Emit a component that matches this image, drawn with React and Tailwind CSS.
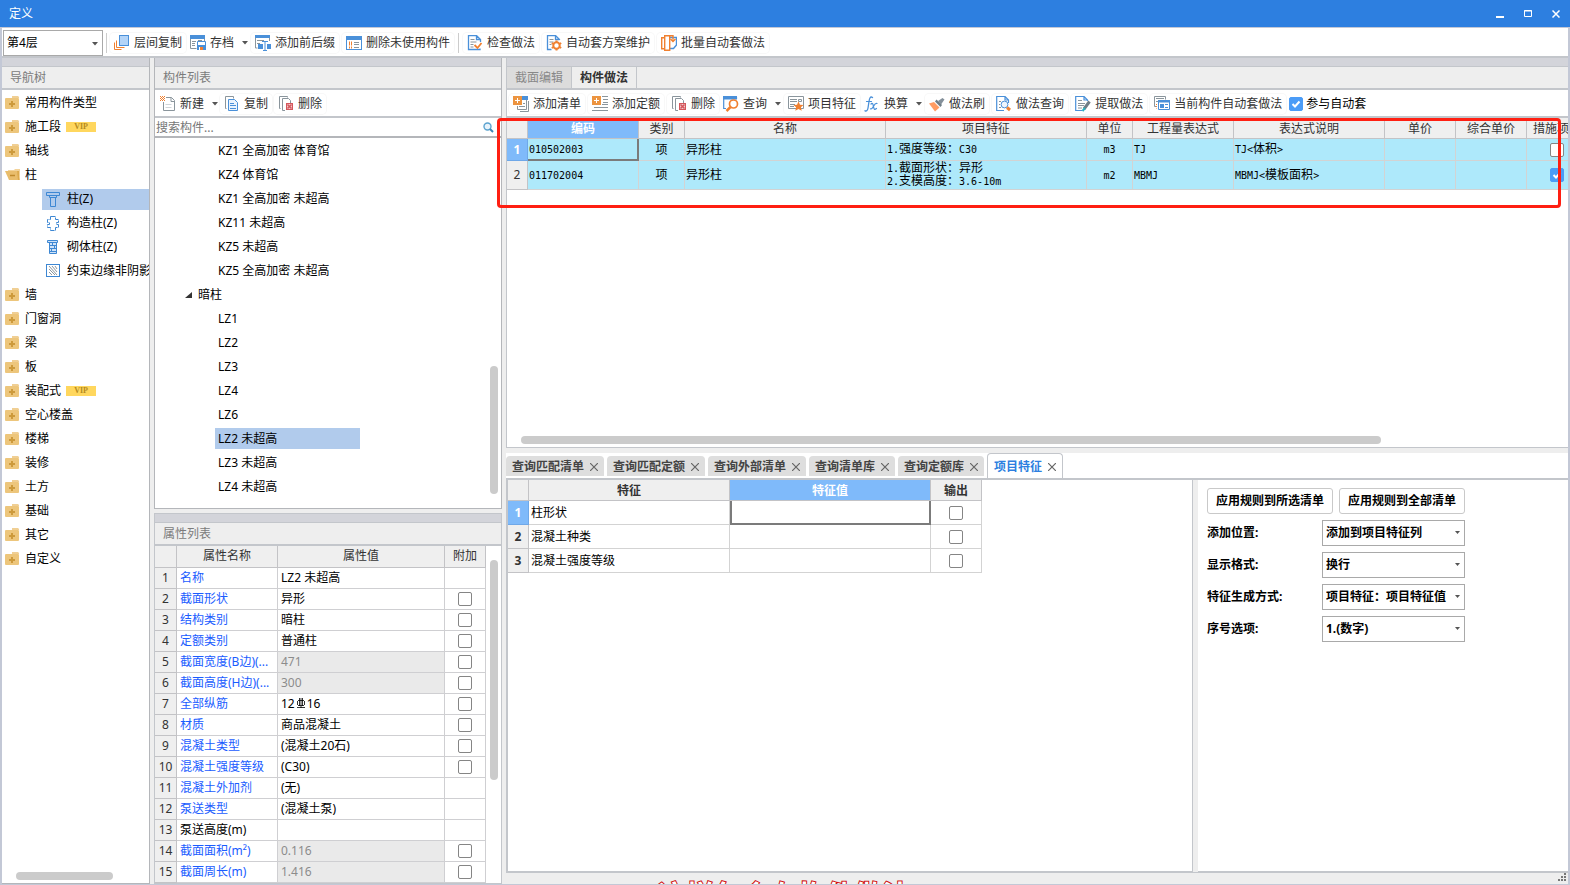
import React from 'react';

const navTop = [
  { name: '常用构件类型' },
  { name: '施工段', vip: true },
  { name: '轴线' },
];

const navColumns = [
  { name: '柱(Z)', icon: 'column', active: true },
  { name: '构造柱(Z)', icon: 'struct' },
  { name: '砌体柱(Z)', icon: 'brick' },
  { name: '约束边缘非阴影', icon: 'hatch' },
];

const navBottom = [
  { name: '墙' },
  { name: '门窗洞' },
  { name: '梁' },
  { name: '板' },
  { name: '装配式', vip: true },
  { name: '空心楼盖' },
  { name: '楼梯' },
  { name: '装修' },
  { name: '土方' },
  { name: '基础' },
  { name: '其它' },
  { name: '自定义' },
];

const kzItems = ['KZ1 全高加密 体育馆', 'KZ4 体育馆', 'KZ1 全高加密 未超高', 'KZ11 未超高', 'KZ5 未超高', 'KZ5 全高加密 未超高'];
const lzItems = ['LZ1', 'LZ2', 'LZ3', 'LZ4', 'LZ6', 'LZ2 未超高', 'LZ3 未超高', 'LZ4 未超高'];

const properties = [
  { name: '名称', value: 'LZ2 未超高' },
  { name: '截面形状', value: '异形', check: true },
  { name: '结构类别', value: '暗柱', check: true },
  { name: '定额类别', value: '普通柱', check: true },
  { name: '截面宽度(B边)(...', value: '471', check: true, readOnly: true },
  { name: '截面高度(H边)(...', value: '300', check: true, readOnly: true },
  { name: '全部纵筋', value: 'rebar', check: true },
  { name: '材质', value: '商品混凝土', check: true },
  { name: '混凝土类型', value: '(混凝土20石)', check: true },
  { name: '混凝土强度等级', value: '(C30)', check: true },
  { name: '混凝土外加剂', value: '(无)' },
  { name: '泵送类型', value: '(混凝土泵)' },
  { name: '泵送高度(m)', value: '', plain: true },
  { name: '截面面积(m²)', value: '0.116', check: true, readOnly: true },
  { name: '截面周长(m)', value: '1.416', check: true, readOnly: true },
];

const queryTabs = ['查询匹配清单', '查询匹配定额', '查询外部清单', '查询清单库', '查询定额库'];
const features = ['柱形状', '混凝土种类', '混凝土强度等级'];

const settings = [
  { id: 'position', label: '添加位置:', value: '添加到项目特征列' },
  { id: 'format', label: '显示格式:', value: '换行' },
  { id: 'mode', label: '特征生成方式:', value: '项目特征：项目特征值' },
  { id: 'serial', label: '序号选项:', value: '1.(数字)' },
];

const BLUE = '#4a90d9';
const GRAY = '#8a959c';
const ORANGE = '#f08030';

const icons = {
  layers: (
    <>
      <path d="M.5 7.500v7h7M2.500 5.500v7h8" fill="none" stroke={ORANGE} />
      <rect x="5.500" y=".5" width="9" height="10" fill="#b3d4f8" stroke={BLUE} />
    </>
  ),
  archive: (
    <>
      <path d="M.5 1v12.500h6M14.500 1v5" fill="none" stroke={GRAY} />
      <path d="M0 0h15v4H0z" fill={BLUE} />
      <path d="M2 6.500h4M2 8.500h3M2 10.500h3M8 5.500h4" stroke={GRAY} />
      <path d="M7.500 6.500h8v8h-8z" fill="#fff" stroke={BLUE} />
      <path d="M7 10h9v5H7z" fill={BLUE} />
      <path d="M9 12h4v3H9z" fill="#fff" />
      <path d="M10 12h3v3h-3z" fill={ORANGE} />
    </>
  ),
  affix: (
    <>
      <path d="M.5 2v11h2M14.500 2v4" fill="none" stroke={GRAY} />
      <path d="M0 0h15v3H0z" fill={BLUE} />
      <path d="M2 5.500h7M2 8.500h3" stroke={GRAY} />
      <path d="M3 9h5v5H3zM12 9h4v5h-4z" fill={BLUE} />
      <path d="M7 6.500h6M10 6.500v9M8 15.500h4" stroke={BLUE} fill="none" />
    </>
  ),
  unused: (
    <>
      <rect x=".5" y="1.500" width="15" height="13" fill="#fff" stroke={BLUE} />
      <path d="M0 1h16v4H0z" fill={BLUE} />
      <path d="M3 7.500h3M3 9.500h3M3 12.500h3" stroke={ORANGE} strokeDasharray="1 1" strokeWidth="2" />
      <path d="M8 7.500h5M8 9.500h5M8 12.500h5" stroke={GRAY} />
    </>
  ),
  check: (
    <>
      <path d="M13.500 7V4.500l-4-4h-8v14h11.500v-1M9.500.5v4h4" fill="none" stroke={BLUE} strokeWidth="1.300" />
      <path d="M3.500 4.500h4M3.500 7h6M3.500 9.500h3M3.500 12h3" stroke={GRAY} />
      <path d="M7.500 10l3 3 4-5" fill="none" stroke={ORANGE} strokeWidth="1.800" />
    </>
  ),
  gearDoc: (
    <>
      <path d="M13.500 5V4.500l-4-4h-8v14h4M9.500.5v4h4" fill="none" stroke={BLUE} strokeWidth="1.300" />
      <path d="M3.500 4.500h4M3.500 7h4M3.500 9.500h2" stroke={GRAY} />
      <circle cx="10.500" cy="10.500" r="3.200" fill="none" stroke={ORANGE} strokeWidth="2" />
      <path d="M10.500 5.500v2M10.500 13.500v2M5.800 8l1.800 1M13.400 12l1.800 1M5.800 13l1.800-1M13.400 9l1.800-1" stroke={ORANGE} strokeWidth="2" />
    </>
  ),
  batch: (
    <>
      <path d="M9 2.500h6.500V10l-3 3.500H8" fill="#fff" stroke={BLUE} strokeWidth="1.400" />
      <path d="M.7 2.700h5v11h-5z" fill="#fff" stroke={ORANGE} strokeWidth="1.400" />
      <path d="M3.700.7h5v14.500h-5z" fill="#fff" stroke={ORANGE} strokeWidth="1.400" />
      <path d="M8 .8h4v4M9.500 4l2.500 2.500L14.500 4" fill="none" stroke={ORANGE} strokeWidth="1.400" />
    </>
  ),
  newDoc: (
    <>
      <path d="M3.500 6v8.500h11v-10l-3-3H6M11 1.500v4h3.500" fill="none" stroke={GRAY} />
      <path d="M5.500 8.500h6M5.500 11.500h6" stroke="#cfd4d8" />
      <path d="M0 0h1v1H0zM2 0h1v1H2zM4 0h1v1H4zM1 1h1v1H1zM3 1h1v1H3zM0 2h1v1H0zM2 2h1v1H2zM4 2h1v1H4zM1 3h1v1H1zM3 3h1v1H3zM0 4h1v1H0zM2 4h1v1H2zM4 4h1v1H4z" fill={ORANGE} />
    </>
  ),
  copy: (
    <>
      <path d="M2.500 12.500h-1V.5h8v2" fill="none" stroke={GRAY} />
      <path d="M4.500 3.500h6l3 3v8h-9z" fill="#eaf3fd" stroke={BLUE} />
      <path d="M6 7.500h4M6 9.500h6M6 12.500h6" stroke={BLUE} />
    </>
  ),
  remove: (
    <>
      <path d="M2.500 12.500h-1V.5h8v1" fill="none" stroke={GRAY} />
      <path d="M7 14.500H4.500v-12h6l2 2V7" fill="none" stroke={GRAY} />
      <rect x="8.500" y="7.500" width="6" height="6" fill="#f3c6c9" stroke="#d4575c" />
      <path d="M9.500 8.500l4 4M13.500 8.500l-4 4" stroke="#d4575c" strokeWidth="1.500" />
    </>
  ),
  addList: (
    <>
      <path d="M4.500 10v3.500h9V3" fill="none" stroke={GRAY} />
      <path d="M7 15.500h8.500V5" fill="none" stroke={GRAY} />
      <path d="M9 0h6v4H9z" fill={BLUE} />
      <path d="M0 0h9v9H0z" fill="#ec9440" />
      <path d="M4.500 2v5M2 4.500h5" stroke="#fff" />
      <path d="M6 10.500h6M10 7.500h2" stroke={GRAY} />
    </>
  ),
  addQuota: (
    <>
      <path d="M0 0h9v9H0z" fill="#ec9440" />
      <path d="M4.500 2v5M2 4.500h5" stroke="#fff" />
      <path d="M10 .5h6M11 3.500h5M11 6.500h5M10 8.500h6M2 11.500h14M0 14.500h16" stroke={GRAY} />
    </>
  ),
  query: (
    <>
      <path d="M.7 3v9.500H3M13.500 1v2" fill="none" stroke={BLUE} strokeWidth="1.200" />
      <path d="M0 0h14v3.500H0z" fill={BLUE} />
      <circle cx="10.500" cy="8" r="4" fill="#fff" stroke={ORANGE} strokeWidth="1.700" />
      <path d="M7.500 11L3.500 15" stroke={ORANGE} strokeWidth="2.500" />
    </>
  ),
  star: (
    <>
      <path d="M.5.500h15v12H.5z" fill="#fff" stroke={GRAY} />
      <path d="M2 3.500h7M2 5.500h7M2 8.500h5M2 10.500h4M10.500 3.500h3v2h-3z" fill="none" stroke={GRAY} />
      <path d="M10.500 5.500l1.500 3.200 3.500.3-2.600 2.300.8 3.500-3.200-1.900-3.200 1.900.8-3.500L5.500 9 9 8.700z" fill={ORANGE} />
    </>
  ),
  fx: (
    <g fill="none" stroke={BLUE} strokeLinecap="round">
      <path d="M8.500 1.500c-2-1.500-3 .5-3.500 4L4 12c-.4 2.500-1.500 3.500-3 2.800" strokeWidth="1.300" />
      <path d="M2.500 5.500h5M7 8c1.500-1.500 2-.5 2.500 2.500s1 3.500 3 2M13 7.500c-1.500-.5-2.500 1-3.500 2.700S7.500 13.500 6.500 12.800" strokeWidth="1.200" />
    </g>
  ),
  brush: (
    <>
      <path d="M9 5l4.500-3 2 1.500-3.500 5z" fill="#84909a" />
      <path d="M6 5.500l1.500-2L13 9l-1.500 2z" fill="#6f7d86" />
      <path d="M0 7.500l5-1.500 5.500 5.500L6 15.500z" fill="#ff9c63" />
    </>
  ),
  docSearch: (
    <>
      <path d="M12.500 7V4l-3.500-3.500H.7v14H8M9 .5V4h3.500" fill="none" stroke={BLUE} strokeWidth="1.200" />
      <path d="M3 5.500h2M3 8.500h1M3 11.500h2" stroke={GRAY} />
      <circle cx="8.500" cy="8.500" r="3.400" fill="#eef5fd" stroke={BLUE} />
      <path d="M11 11.500l3 2.500" stroke={ORANGE} strokeWidth="3" />
    </>
  ),
  extract: (
    <>
      <path d="M12.500 5V4L9 .5H.7v14H7M9 .5V4h3.500" fill="none" stroke={BLUE} strokeWidth="1.200" />
      <path d="M3 4.500h4M3 7.500h7M3 9.500h6M3 12h4" stroke={GRAY} />
      <path d="M9 13l5.500-7.500" stroke="#6f7d86" strokeWidth="3" />
      <path d="M7.500 15l2.500-3" stroke="#25b0c0" strokeWidth="2" />
    </>
  ),
  windows: (
    <>
      <path d="M2 10.500H.5V.5h11v3" fill="none" stroke={GRAY} />
      <path d="M2 2.500h8M2 5.500h2" stroke={GRAY} />
      <path d="M4.500 4.500h11v9h-11z" fill="#fff" stroke={BLUE} />
      <path d="M4 4h12v2.500H4z" fill={BLUE} />
      <path d="M6 8h4v4H6z" fill={BLUE} />
      <path d="M11 8.500h3M11 11.500h3" stroke={BLUE} />
      <path d="M2.500 8v4.500" stroke={ORANGE} strokeDasharray="1 1" />
    </>
  ),
};

function Icon({ name }) {
  return (
    <svg width="16" height="16" viewBox="0 0 16 16" className="shrink-0">{icons[name]}</svg>
  );
}

function Caret() {
  return (
    <svg width="6" height="4" viewBox="0 0 6 4" className="shrink-0"><path d="M0 0h6L3 3.500z" fill="#555" /></svg>
  );
}

function ToolButton({ icon, label, menu }) {
  if (menu) {
    return (
      <button className="flex items-center gap-1 h-5 pl-px whitespace-nowrap text-[#333]">
        <Icon name={icon} />
        {label}
        <span className="pl-1"><Caret /></span>
      </button>
    );
  }
  return (
    <button className="flex items-center gap-1 h-5 px-1 rounded-sm whitespace-nowrap text-[#333] shadow-[0_0_0_1px_#f8f8f8]">
      <Icon name={icon} />
      {label}
    </button>
  );
}

function Check({ id, label, checked }) {
  return (
    <span className="relative inline-block w-3.5 h-3.5 align-middle">
      <input
        type="checkbox"
        id={id}
        aria-label={label}
        defaultChecked={checked}
        className="peer block appearance-none w-3.5 h-3.5 rounded-[2px] border border-[#858585] bg-white checked:bg-[#4b9cf7] checked:border-[#4b9cf7]"
      />
      <svg viewBox="0 0 14 14" className="absolute inset-0 w-3.5 h-3.5 hidden peer-checked:block pointer-events-none">
        <path d="M3.500 7l2.500 2.500 4.500-5" fill="none" stroke="#fff" strokeWidth="2" />
      </svg>
    </span>
  );
}

// Grid cells use a narrow monospace for latin next to full-size Chinese
function GridText({ text }) {
  return text.split(/([\x20-\x7e]+)/).map((part, i) => (
    i % 2 === 1
      ? <span key={i} className="text-[10px] font-['DejaVu_Sans_Mono',monospace]">{part}</span>
      : part
  ));
}

function Folder({ open }) {
  if (open) {
    return (
      <svg width="16" height="14" viewBox="0 0 16 14" className="shrink-0">
        <path d="M3 2h6l1-1h5v11H4z" fill="#f3d39a" />
        <path d="M0 3h12l3 9H4z" fill="#e9bd6c" />
        <path d="M12 3h2v9h-1z" fill="#dca94c" />
        <path d="M5 7.500h5" stroke="#c08a2c" strokeWidth="1.500" />
      </svg>
    );
  }
  return (
    <svg width="16" height="14" viewBox="0 0 16 14" className="shrink-0">
      <path d="M7 0h6l1 1v1H7z" fill="#f0cf94" />
      <rect x="0" y="2" width="14" height="11" rx="1" fill="#edc67c" />
      <path d="M7 5v6M4 8h6" stroke="#cd9a3c" strokeWidth="2" />
    </svg>
  );
}

function ColumnIcon({ type }) {
  return (
    <svg width="14" height="15" viewBox="0 0 14 15" className="shrink-0" fill="none" stroke="#3d87d3">
      {type === 'column' && <path d="M.5.500h13v3H.5zM3.500 3.500v2h7v-2M4.500 5.500v9h5v-9" />}
      {type === 'struct' && <path d="M4.500.500h5v3h3v3h-2v2h2v3h-3v3h-5v-3h-3v-3h2v-2h-2v-3h3z" strokeDasharray="5 1" />}
      {type === 'brick' && (
        <>
          <path d="M1.500.500h10v2h-10zM3.500 2.500v11h7v-11" fill="#cfe2f7" />
          <path d="M3 5.500h7M3 8.500h7M3 11.500h7M6.500 3v3M8.500 6v3M5.500 9v3" />
        </>
      )}
      {type === 'hatch' && (
        <>
          <rect x=".5" y=".5" width="13" height="12" />
          <path d="M3 2l8 9M3 5l6 6M3 8l3 3M6 2l5 6M9 2l2 3" stroke="#8c979f" />
        </>
      )}
    </svg>
  );
}

function NavRow({ item, open }) {
  return (
    <li className="flex items-center h-6 pl-[3px] gap-1 whitespace-nowrap">
      <Folder open={open} />
      <span>{item.name}</span>
      {item.vip && (
        <span className="ml-px w-[30px] h-2.5 bg-[#ffd75e] text-[#b58a1e] text-[8px] leading-[10px] font-bold text-center font-['Liberation_Serif',serif]">VIP</span>
      )}
    </li>
  );
}

function PanelTitle({ children }) {
  return (
    <>
      <div className="h-[9px] shrink-0 bg-[#d3d4da] border-b border-[#c3c6cb]"></div>
      <h2 className="h-[23px] shrink-0 bg-[#eee] border-b-2 border-[#c3c6cb] pl-2 leading-[21px] text-[#7b7b7b]">{children}</h2>
    </>
  );
}

function NavTree() {
  return (
    <nav className="w-[148px] shrink-0 flex flex-col relative overflow-hidden bg-white border-r border-b border-[#b4b6ba]">
      <PanelTitle>导航树</PanelTitle>
      <ul className="flex-1 min-h-0 overflow-hidden pt-px">
        {navTop.map((item) => <NavRow key={item.name} item={item} />)}
        <NavRow item={{ name: '柱' }} open />
        {navColumns.map((item) => (
          <li key={item.name} className="flex items-center h-6 pl-10">
            <div className={`flex items-center gap-[7px] flex-1 h-[21px] pl-1 whitespace-nowrap ${item.active ? 'bg-[#b1cbec]' : ''}`}>
              <ColumnIcon type={item.icon} />
              {item.name}
            </div>
          </li>
        ))}
        {navBottom.map((item) => <NavRow key={item.name} item={item} />)}
      </ul>
      <div className="absolute left-3.5 bottom-[3px] w-[97px] h-2 rounded-full bg-[#cbcbcb]"></div>
    </nav>
  );
}

function ComponentList() {
  return (
    <section className="flex-[451_451_0%] min-h-0 flex flex-col relative overflow-hidden bg-white border-x border-b border-[#b4b6ba]">
      <PanelTitle>构件列表</PanelTitle>
      <div className="h-7 shrink-0 flex items-center gap-0.5 pt-px pl-1 border-b-2 border-[#c3c6cb]">
        <ToolButton icon="newDoc" label="新建" menu />
        <ToolButton icon="copy" label="复制" />
        <ToolButton icon="remove" label="删除" />
      </div>
      <div className="h-5 shrink-0 flex items-center pt-px pr-[7px] border-b-2 border-[#b4b6ba]">
        <input type="text" aria-label="搜索构件" placeholder="搜索构件..." className="flex-1 h-4 pl-px outline-none placeholder:text-[#777]" />
        <svg width="11" height="11" viewBox="0 0 11 11">
          <circle cx="4.500" cy="4.500" r="3.500" fill="#e8f3fb" stroke="#5ba3cf" strokeWidth="1.400" />
          <path d="M7 7l3 3" stroke="#3c86b5" strokeWidth="2" />
        </svg>
      </div>
      <ul className="flex-1 min-h-0 overflow-hidden">
        {kzItems.map((name) => <li key={name} className="h-6 pt-px leading-6 pl-[63px]">{name}</li>)}
        <li className="h-6 pt-px flex items-center gap-1.5 pl-[30px]">
          <svg width="7" height="6" viewBox="0 0 7 6"><path d="M7 0v6H0z" fill="#333" /></svg>
          暗柱
        </li>
        {lzItems.map((name, i) => (
          <li key={name} className="h-6 flex items-center pl-[60px]">
            <span className={`w-[145px] h-[21px] leading-[21px] pl-[3px] ${i === 5 ? 'bg-[#b1cbec]' : ''}`}>{name}</span>
          </li>
        ))}
      </ul>
      <div className="absolute right-[3px] bottom-3.5 w-2 h-32 rounded-full bg-[#cbcbcb]"></div>
    </section>
  );
}

function PropertyList() {
  return (
    <section className="flex-[370_370_0%] min-h-0 flex flex-col relative overflow-hidden bg-white border border-[#c3c6cb]">
      <PanelTitle>属性列表</PanelTitle>
      <div className="flex-1 min-h-0 overflow-hidden">
        <table className="w-[331px] table-fixed border-separate border-spacing-0">
          <colgroup>
            <col className="w-[22px]" />
            <col className="w-[101px]" />
            <col className="w-[167px]" />
            <col className="w-[41px]" />
          </colgroup>
          <thead>
            <tr className="h-[22px] bg-[#efefef] text-[#333]">
              {['', '属性名称', '属性值', '附加'].map((h, i) => (
                <th key={i} className="border-r border-b border-[#c3c3c6] font-normal p-0">{h}</th>
              ))}
            </tr>
          </thead>
          <tbody>
            {properties.map((p, i) => (
              <tr key={i} className="h-[21px]">
                <td className="border-r border-b border-[#c3c3c6] bg-[#efefef] text-center text-[#333] p-0">{i + 1}</td>
                <td className={`border-r border-b border-[#cfcfd2] p-0 pl-[3px] whitespace-nowrap overflow-hidden ${p.plain ? 'text-black' : 'text-[#1a5cff]'}`}>{p.name}</td>
                <td className={`border-r border-b border-[#cfcfd2] p-0 pl-[3px] ${p.readOnly ? 'bg-[#eaeaea] text-[#8c8c8c]' : ''}`}>
                  {p.value === 'rebar' ? (
                    <span className="flex items-center">
                      12
                      <svg width="12" height="12" viewBox="0 0 12 12" fill="none" stroke="#000" aria-label="Φ">
                        <path d="M2.500 3v4M9.500 3v4M3 2.500h6M3 7.500h6M4.500 0v8M7.500 0v8M6 0v10M2 9.500h8" strokeWidth=".8" />
                      </svg>
                      16
                    </span>
                  ) : p.value}
                </td>
                <td className="border-r border-b border-[#cfcfd2] p-0 text-center leading-none">
                  {p.check && <Check label={p.name} />}
                </td>
              </tr>
            ))}
            <tr className="h-[21px]">
              <td className="border-r border-[#c3c3c6] bg-[#efefef]"></td>
              <td className="border-r border-[#cfcfd2]"></td>
              <td className="border-r border-[#cfcfd2]"></td>
              <td className="border-r border-[#cfcfd2]"></td>
            </tr>
          </tbody>
        </table>
      </div>
      <div className="absolute right-[3px] top-[46px] w-2 h-[220px] rounded-full bg-[#cbcbcb]"></div>
    </section>
  );
}

const gridHeads = ['', '编码', '类别', '名称', '项目特征', '单位', '工程量表达式', '表达式说明', '单价', '综合单价', '措施项目'];
const gridRows = [
  { code: '010502003', feature: ['1.强度等级：C30'], unit: 'm3', expr: 'TJ', desc: 'TJ<体积>' },
  { code: '011702004', feature: ['1.截面形状：异形', '2.支模高度：3.6-10m'], unit: 'm2', expr: 'MBMJ', desc: 'MBMJ<模板面积>', checked: true },
];

function PracticeGrid() {
  const cell = 'border-r border-b border-[#d3d3d3] bg-[#aee9fb] p-0 leading-3';
  return (
    <div className="flex-1 min-h-0 relative">
      <div className="h-full overflow-hidden">
        <table className="w-[1081px] table-fixed border-separate border-spacing-0">
          <colgroup>
            <col className="w-[21px]" />
            <col className="w-[111px]" />
            <col className="w-[46px]" />
            <col className="w-[201px]" />
            <col className="w-[201px]" />
            <col className="w-[46px]" />
            <col className="w-[101px]" />
            <col className="w-[151px]" />
            <col className="w-[71px]" />
            <col className="w-[71px]" />
            <col className="w-[61px]" />
          </colgroup>
          <thead>
            <tr className="h-[21px]">
              {gridHeads.map((h, i) => (
                <th key={i} className={`border-r border-b border-[#c3c3c6] p-0 pt-0.5 whitespace-nowrap ${i === 1 ? 'bg-[#7fbafa] text-white font-bold' : 'bg-[#efefef] text-[#333] font-normal'}`}>{h}</th>
              ))}
            </tr>
          </thead>
          <tbody>
            {gridRows.map((r, i) => (
              <tr key={r.code} className={i === 0 ? 'h-[22px]' : 'h-[29px]'}>
                <td className={`border-r border-b p-0 text-center ${i === 0 ? 'bg-[#7fbafa] border-[#6fa8e8] text-white font-bold' : 'bg-[#efefef] border-[#c3c3c6] text-[#333]'}`}>{i + 1}</td>
                <td className={`p-0 pl-px leading-3 bg-[#aee9fb] ${i === 0 ? 'border-r-2 border-b-2 border-[#7b7b7b]' : 'border-r border-b border-[#d3d3d3]'}`}><GridText text={r.code} /></td>
                <td className={`${cell} text-center`}>项</td>
                <td className={`${cell} pl-px`}>异形柱</td>
                <td className={`${cell} pl-px`}>
                  {r.feature.map((line) => <div key={line} className="whitespace-nowrap"><GridText text={line} /></div>)}
                </td>
                <td className={`${cell} text-center`}><GridText text={r.unit} /></td>
                <td className={`${cell} pl-px`}><GridText text={r.expr} /></td>
                <td className={`${cell} pl-px`}><GridText text={r.desc} /></td>
                <td className={cell}></td>
                <td className={cell}></td>
                <td className={`${cell} text-center`}><Check label="措施项目" checked={r.checked} /></td>
              </tr>
            ))}
          </tbody>
        </table>
      </div>
      <div className="absolute -left-2.5 right-[7px] top-0 h-[90px] border-3 border-[#ff1f12] rounded"></div>
      <div className="absolute left-3.5 right-[187px] bottom-[3px] h-2 rounded-full bg-[#cbcbcb]"></div>
    </div>
  );
}

function PracticePanel() {
  return (
    <section className="flex-[389_389_0%] min-h-0 flex flex-col bg-white border-l border-b border-[#c3c6cb]">
      <div className="h-[9px] shrink-0 bg-[#d3d4da] border-b border-[#c3c6cb]"></div>
      <div className="h-[23px] shrink-0 flex bg-[#eee] border-b-2 border-[#c3c6cb]">
        <button className="px-2 bg-[#dcdcdc] text-[#888] border-r border-[#c3c6cb]">截面编辑</button>
        <button className="px-2 font-bold text-[#333] border-r border-[#c3c6cb]">构件做法</button>
      </div>
      <div className="h-7 shrink-0 flex items-center gap-[3px] pt-px pl-0.5 border-b-2 border-[#c3c6cb]">
        <ToolButton icon="addList" label="添加清单" />
        <ToolButton icon="addQuota" label="添加定额" />
        <ToolButton icon="remove" label="删除" />
        <ToolButton icon="query" label="查询" menu />
        <ToolButton icon="star" label="项目特征" />
        <ToolButton icon="fx" label="换算" menu />
        <ToolButton icon="brush" label="做法刷" />
        <ToolButton icon="docSearch" label="做法查询" />
        <ToolButton icon="extract" label="提取做法" />
        <ToolButton icon="windows" label="当前构件自动套做法" />
        <Check id="autoApply" checked />
        <label htmlFor="autoApply" className="whitespace-nowrap">参与自动套</label>
      </div>
      <PracticeGrid />
    </section>
  );
}

function CloseMark() {
  return (
    <svg width="8" height="8" viewBox="0 0 8 8"><path d="M0 0l8 8M8 0L0 8" stroke="#666" strokeWidth="1.200" /></svg>
  );
}

function FeaturePanel() {
  return (
    <section className="flex-[419_419_0%] min-h-0 flex flex-col bg-white">
      <div className="h-[27px] shrink-0 flex items-end gap-[3px] border-b-2 border-[#c3c6cb]">
        {queryTabs.map((t) => (
          <button key={t} className="h-5 mb-0.5 pt-px flex items-center gap-1.5 px-1.5 bg-[#dedede] rounded-t-sm font-bold text-[#444] whitespace-nowrap">
            {t}
            <CloseMark />
          </button>
        ))}
        <button className="h-[25px] pt-px flex items-center gap-1.5 px-1.5 border border-b-0 border-[#c3c6cb] rounded-t-sm font-bold text-[#2d7fe0] whitespace-nowrap">
          项目特征
          <CloseMark />
        </button>
      </div>
      <div className="flex-1 min-h-0 flex">
        <div className="flex-[684_684_0%] overflow-hidden border-l-2 border-r border-b border-[#c3c6cb]">
          <table className="w-[474px] table-fixed border-separate border-spacing-0">
            <colgroup>
              <col className="w-[21px]" />
              <col className="w-[201px]" />
              <col className="w-[201px]" />
              <col className="w-[51px]" />
            </colgroup>
            <thead>
              <tr className="h-[21px]">
                {['', '特征', '特征值', '输出'].map((h, i) => (
                  <th key={i} className={`border-r border-b border-[#c3c3c6] p-0 pt-0.5 font-bold ${i === 2 ? 'bg-[#7fbafa] text-white' : 'bg-[#efefef] text-[#333]'}`}>{h}</th>
                ))}
              </tr>
            </thead>
            <tbody>
              {features.map((f, i) => (
                <tr key={f} className="h-6">
                  <td className={`border-r border-b p-0 text-center font-bold ${i === 0 ? 'bg-[#7fbafa] border-[#6fa8e8] text-white' : 'bg-[#efefef] border-[#c3c3c6] text-[#333]'}`}>{i + 1}</td>
                  <td className="border-r border-b border-[#d3d3d3] p-0 pl-0.5">{f}</td>
                  <td className={`p-0 ${i === 0 ? 'border-2 border-t-0 border-[#7b7b7b]' : 'border-r border-b border-[#d3d3d3]'}`}></td>
                  <td className="border-r border-b border-[#d3d3d3] p-0 text-center leading-none"><Check label={f} /></td>
                </tr>
              ))}
            </tbody>
          </table>
        </div>
        <div className="w-[5px] shrink-0 bg-[#eee]"></div>
        <div className="flex-[361_361_0%] border-b border-[#c3c6cb] pt-2 pl-[9px] font-bold">
          <div className="flex gap-1.5">
            <button className="h-[26px] px-2 border border-[#c9c9c9] rounded-[3px]">应用规则到所选清单</button>
            <button className="h-[26px] px-2 border border-[#c9c9c9] rounded-[3px]">应用规则到全部清单</button>
          </div>
          {settings.map((s) => (
            <div key={s.id} className="flex items-center mt-1.5">
              <label htmlFor={s.id} className="w-[115px]">{s.label}</label>
              <div className="relative">
                <select id={s.id} className="appearance-none w-[143px] h-[26px] pl-[3px] border border-[#a9a9a9] bg-white">
                  <option>{s.value}</option>
                </select>
                <span className="absolute right-[5px] top-[11px] pointer-events-none">
                  <svg width="5" height="3" viewBox="0 0 5 3"><path d="M0 0h5L2.500 3z" fill="#555" /></svg>
                </span>
              </div>
            </div>
          ))}
        </div>
      </div>
    </section>
  );
}

export default function App() {
  return (
    <div className="h-screen flex flex-col overflow-hidden bg-[#eee] text-xs leading-4 text-black font-['Noto_Sans','Noto_Sans_CJK_SC',sans-serif]">
      <header className="h-[27px] shrink-0 flex items-center justify-between pl-[9px] pr-2.5 bg-[#2d7fe0] text-white">
        <h1>定义</h1>
        <div className="flex gap-5">
          <button aria-label="最小化"><svg width="8" height="8" viewBox="0 0 8 8"><path d="M0 7h8" stroke="#fff" strokeWidth="2" /></svg></button>
          <button aria-label="最大化"><svg width="8" height="8" viewBox="0 0 8 8"><path d="M.5.500h7v6h-7zM0 1h8" fill="none" stroke="#fff" /></svg></button>
          <button aria-label="关闭"><svg width="8" height="8" viewBox="0 0 8 8"><path d="M.5.500l7 7M7.500.500l-7 7" stroke="#fff" strokeWidth="1.500" /></svg></button>
        </div>
      </header>

      <div className="flex-1 min-h-0 flex flex-col border-x-2 border-t border-b border-[#c3c8d6]">
        <div className="h-[30px] shrink-0 flex items-center gap-[3px] pt-px pl-px bg-white border-b-2 border-[#c3c6cb]">
          <div className="relative">
            <select aria-label="楼层" className="block appearance-none w-[100px] h-[26px] pl-[3px] border border-[#a9a9a9] bg-white">
              <option>第4层</option>
            </select>
            <span className="absolute right-[5px] top-3 pointer-events-none"><Caret /></span>
          </div>
          <span className="w-px h-5 bg-[#ccc]"></span>
          <ToolButton icon="layers" label="层间复制" />
          <ToolButton icon="archive" label="存档" menu />
          <ToolButton icon="affix" label="添加前后缀" />
          <ToolButton icon="unused" label="删除未使用构件" />
          <span className="w-px h-5 mx-px bg-[#ccc]"></span>
          <ToolButton icon="check" label="检查做法" />
          <ToolButton icon="gearDoc" label="自动套方案维护" />
          <ToolButton icon="batch" label="批量自动套做法" />
        </div>

        <div className="flex-1 min-h-0 flex gap-1">
          <NavTree />
          <div className="w-[348px] shrink-0 flex flex-col gap-1">
            <ComponentList />
            <PropertyList />
          </div>
          <div className="flex-1 min-w-0 flex flex-col">
            <PracticePanel />
            <div className="h-[5px] shrink-0"></div>
            <FeaturePanel />
            <footer className="h-3 shrink-0 flex items-start relative justify-end overflow-hidden border-t border-[#c3c6cb]">
              <p className="absolute left-[152px] top-1.5 whitespace-nowrap text-[28px] leading-8 font-bold text-white [paint-order:stroke] [-webkit-text-stroke:2px_#d01010]">这样包含在构件做法</p>
              <svg width="9" height="9" viewBox="0 0 9 9" className="mr-px">
                <path d="M6 0h2v2H6zM3 3h2v2H3zM6 3h2v2H6zM0 6h2v2H0zM3 6h2v2H3zM6 6h2v2H6z" fill="#777" />
              </svg>
            </footer>
          </div>
        </div>
      </div>
    </div>
  );
}
